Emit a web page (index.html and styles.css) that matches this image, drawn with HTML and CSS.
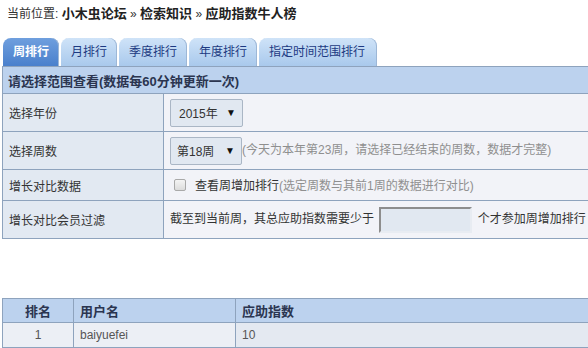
FILE: index.html
```html
<!DOCTYPE html>
<html lang="zh-CN">
<head>
    <meta charset="UTF-8">
    <title>应助指数牛人榜</title>
    <link rel="stylesheet" href="styles.css">
</head>
<body>
    <div class="page">
        <div class="crumb">当前位置: <b>小木虫论坛</b> » <b>检索知识</b> » <b>应助指数牛人榜</b></div>

        <ul class="tabs">
            <li class="tab active">周排行</li>
            <li class="tab">月排行</li>
            <li class="tab">季度排行</li>
            <li class="tab">年度排行</li>
            <li class="tab">指定时间范围排行</li>
        </ul>

        <table class="filter">
            <tr class="head">
                <th colspan="2">请选择范围查看(数据每60分钟更新一次)</th>
            </tr>
            <tr class="tall">
                <td class="label">选择年份</td>
                <td class="value">
                    <span class="sel sel-year"><span>2015年</span><i>▼</i></span>
                </td>
            </tr>
            <tr class="tall">
                <td class="label">选择周数</td>
                <td class="value">
                    <span class="sel sel-week"><span>第18周</span><i>▼</i></span><span class="note">(今天为本年第23周，请选择已经结束的周数，数据才完整)</span>
                </td>
            </tr>
            <tr class="short">
                <td class="label">增长对比数据</td>
                <td class="value">
                    <label class="check"><span class="box"></span>查看周增加排行<span class="note">(选定周数与其前1周的数据进行对比)</span></label>
                </td>
            </tr>
            <tr class="tall">
                <td class="label">增长对比会员过滤</td>
                <td class="value">
                    截至到当前周，其总应助指数需要少于 <input class="num" type="text"> 个才参加周增加排行 <span class="note">(仅对周增加排行有效)</span>
                </td>
            </tr>
        </table>

        <table class="rank">
            <tr>
                <th class="c-rank">排名</th>
                <th class="c-user">用户名</th>
                <th class="c-score">应助指数</th>
            </tr>
            <tr>
                <td class="c-rank">1</td>
                <td class="c-user">baiyuefei</td>
                <td class="c-score">10</td>
            </tr>
        </table>
    </div>
</body>
</html>
```

FILE: styles.css
```css
/* page base */
body {
    margin: 0;
    padding: 0;
    background: #fff;
    color: #333;
    font-family: 'Liberation Sans', 'Noto Sans CJK SC', sans-serif;
    font-size: 12px;
    overflow: hidden;
}

.page {
    width: 820px;
    padding-left: 2px;
}

/* breadcrumb */
.crumb {
    height: 28px;
    line-height: 28px;
    padding-left: 5px;
    font-size: 12px;
    color: #333;
    white-space: nowrap;
}

.crumb b {
    font-size: 13px;
    color: #222;
}

/* tab strip */
.tabs {
    list-style: none;
    margin: 10px 0 0 1px;
    padding: 0;
    display: flex;
    gap: 2px;
    height: 28px;
}

.tab {
    height: 28px;
    line-height: 29px;
    padding: 0 10px;
    font-size: 12px;
    color: #1d3a82;
    border-radius: 8px 8px 0 0;
    background: linear-gradient(#cfe3f8, #a9c9ec);
    box-shadow: inset -1px 0 0 #9db7d6;
    white-space: nowrap;
}

.tab:last-child {
    padding-right: 12px;
}

.tab.active {
    color: #fff;
    font-weight: bold;
    background: linear-gradient(#6f9fde, #4a80cc);
}

/* filter table */
.filter {
    width: 818px;
    border-collapse: collapse;
    border: 1px solid #8ea3bd;
}

.filter td,
.filter th {
    border: 1px solid #8ea3bd;
    padding: 0 6px;
    white-space: nowrap;
}

.filter .head th {
    height: 26px;
    text-align: left;
    font-size: 13px;
    font-weight: bold;
    color: #2b3550;
    background: #bcd2ee;
    padding-left: 5px;
}

.filter .tall td {
    height: 37px;
}

.filter .short td {
    height: 30px;
}

.filter .label {
    width: 148px;
    background: #e2e9f2;
    color: #333;
}

.filter .value {
    background: #f2f3f8;
    color: #333;
}

.note {
    color: #8f8f8f;
}

/* fake select box */
.sel {
    display: inline-flex;
    align-items: center;
    justify-content: space-between;
    height: 26px;
    padding: 0 6px 0 8px;
    border: 1px solid #aab6c5;
    border-radius: 2px;
    background: #e1e8f1;
    color: #333;
    vertical-align: middle;
    box-sizing: content-box;
}

.sel-year {
    width: 57px;
}

.sel-week {
    width: 58px;
    padding-left: 6px;
}

.sel i {
    font-style: normal;
    font-size: 10px;
    color: #111;
}

/* checkbox row */
.check {
    display: inline-flex;
    align-items: center;
}

.check .box {
    width: 10px;
    height: 10px;
    margin: 0 9px 0 4px;
    border: 1px solid #a9a9a9;
    border-radius: 2px;
    background: linear-gradient(#f4f4f4, #dcdcdc);
}

.num {
    width: 89px;
    height: 22px;
    margin: 0 2px;
    padding: 0;
    vertical-align: middle;
    background: #e1e8f1;
    border: 2px solid #e8ecf2;
    border-top-color: #8d8d8d;
    border-left-color: #8d8d8d;
}

/* ranking table */
.rank {
    width: 818px;
    margin-top: 59px;
    border-collapse: collapse;
    border: 1px solid #8ea3bd;
}

.rank th,
.rank td {
    border: 1px solid #8ea3bd;
    padding: 0 6px;
    text-align: left;
}

.rank th {
    height: 23px;
    font-size: 13px;
    color: #2b3550;
    background: #bcd2ee;
}

.rank td {
    height: 24px;
    background: #eceff5;
    color: #555;
}

.rank .c-rank {
    width: 58px;
    text-align: center;
}

.rank .c-user {
    width: 149px;
}

.rank td.c-score {
    background: #e4e9f1;
}
```
